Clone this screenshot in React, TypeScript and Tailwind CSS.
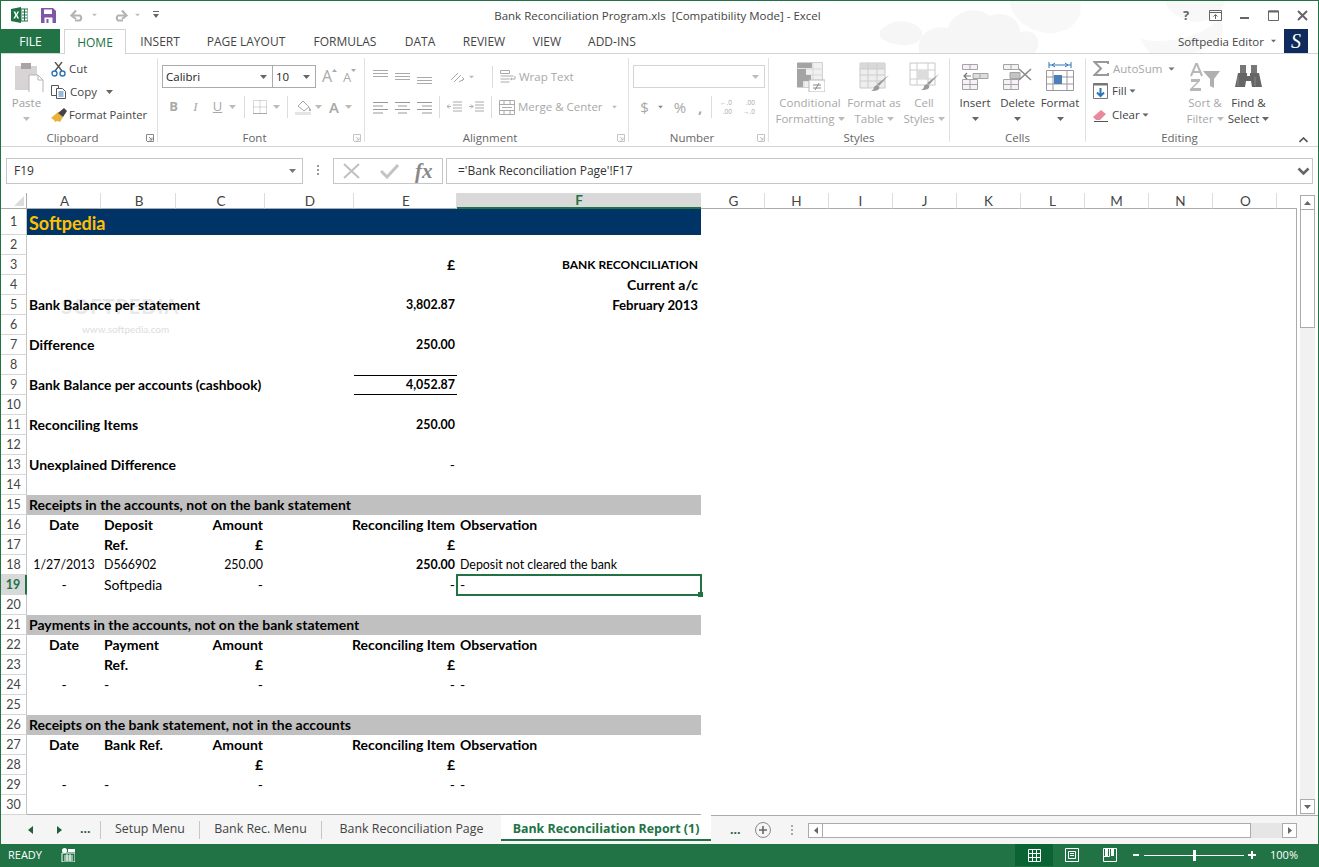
import type { ReactNode } from "react";

type SheetRow = {
  n: number;
  h?: number;
  kind?: "title" | "band" | "label" | "head";
  a?: string;
  b?: string;
  c?: string;
  e?: string;
  f?: string;
  boldE?: boolean;
  fRight?: boolean;
  ruled?: boolean;
};

const sheetRows: SheetRow[] = [
  { n: 1, h: 26, kind: "title", a: "Softpedia" },
  { n: 2 },
  { n: 3, e: "£", boldE: true, f: "BANK RECONCILIATION", fRight: true },
  { n: 4, f: "Current a/c", fRight: true },
  { n: 5, kind: "label", a: "Bank Balance per statement", e: "3,802.87", boldE: true, f: "February 2013", fRight: true },
  { n: 6 },
  { n: 7, kind: "label", a: "Difference", e: "250.00", boldE: true },
  { n: 8 },
  { n: 9, kind: "label", a: "Bank Balance per accounts (cashbook)", e: "4,052.87", boldE: true, ruled: true },
  { n: 10 },
  { n: 11, kind: "label", a: "Reconciling Items", e: "250.00", boldE: true },
  { n: 12 },
  { n: 13, kind: "label", a: "Unexplained Difference", e: "-" },
  { n: 14 },
  { n: 15, kind: "band", a: "Receipts in the accounts, not on the bank statement" },
  { n: 16, kind: "head", a: "Date", b: "Deposit", c: "Amount", e: "Reconciling Item", f: "Observation" },
  { n: 17, kind: "head", b: "Ref.", c: "£", e: "£" },
  { n: 18, a: "1/27/2013", b: "D566902", c: "250.00", e: "250.00", boldE: true, f: "Deposit not cleared the bank" },
  { n: 19, a: "-", b: "Softpedia", c: "-", e: "-", f: "-" },
  { n: 20 },
  { n: 21, kind: "band", a: "Payments in the accounts, not on the bank statement" },
  { n: 22, kind: "head", a: "Date", b: "Payment", c: "Amount", e: "Reconciling Item", f: "Observation" },
  { n: 23, kind: "head", b: "Ref.", c: "£", e: "£" },
  { n: 24, a: "-", b: "-", c: "-", e: "-", f: "-" },
  { n: 25 },
  { n: 26, kind: "band", a: "Receipts on the bank statement, not in the accounts" },
  { n: 27, kind: "head", a: "Date", b: "Bank Ref.", c: "Amount", e: "Reconciling Item", f: "Observation" },
  { n: 28, kind: "head", c: "£", e: "£" },
  { n: 29, a: "-", b: "-", c: "-", e: "-", f: "-" },
  { n: 30 },
];

const columns = [
  { label: "A", w: "w-[74px]", pad: "pl-[2px]" },
  { label: "B", w: "w-[75px]", pad: "pl-[2px]" },
  { label: "C", w: "w-[89px]", pad: "pl-[2px]" },
  { label: "D", w: "w-[89px]", pad: "pl-[2px]" },
  { label: "E", w: "w-[103px]", pad: "pl-[2px]" },
  { label: "F", w: "w-[244px]", pad: "" },
  { label: "G", w: "w-[64px]", pad: "pl-[2px]" },
  { label: "H", w: "w-[64px]", pad: "" },
  { label: "I", w: "w-[64px]", pad: "" },
  { label: "J", w: "w-[64px]", pad: "" },
  { label: "K", w: "w-[64px]", pad: "" },
  { label: "L", w: "w-[64px]", pad: "" },
  { label: "M", w: "w-[64px]", pad: "" },
  { label: "N", w: "w-[64px]", pad: "" },
  { label: "O", w: "w-[64px]", pad: "pl-[2px]" },
];

const ribbonTabs = [
  { label: "INSERT", w: "w-[68px]" },
  { label: "PAGE LAYOUT", w: "w-[104px]" },
  { label: "FORMULAS", w: "w-[94px]" },
  { label: "DATA", w: "w-[56px]" },
  { label: "REVIEW", w: "w-[72px]" },
  { label: "VIEW", w: "w-[54px]" },
  { label: "ADD-INS", w: "w-[76px]" },
];

function Ico({ w, h, children, className }: { w: number; h: number; children: ReactNode; className?: string }) {
  return (
    <svg width={w} height={h} viewBox={`0 0 ${w} ${h}`} className={`shrink-0 ${className ?? ""}`}>
      {children}
    </svg>
  );
}

function Caret({ className, color = "#777" }: { className?: string; color?: string }) {
  return (
    <Ico w={7} h={4} className={className}>
      <path d="M0 0h7L3.500 4z" fill={color} />
    </Ico>
  );
}

function Launcher({ color = "#888" }: { color?: string }) {
  return (
    <Ico w={8} h={8}>
      <path d="M0.500 7V0.500H7.500V7.500H1" fill="none" stroke={color} />
      <path d="M3 3l3 3M6 3.500V6H3.500" fill="none" stroke={color} />
    </Ico>
  );
}

function Group({ w, label, launcher, launcherColor, children, last }: {
  w: string;
  label: string;
  launcher?: boolean;
  launcherColor?: string;
  children: ReactNode;
  last?: boolean;
}) {
  return (
    <div className={`${w} mt-[4px] h-[84px] shrink-0 flex flex-col ${last ? "" : "border-r border-[#e1e1e1]"}`}>
      <div className="flex-1 min-h-0">{children}</div>
      <div className={`-mb-[3px] h-[14px] relative flex items-center justify-center text-[11.5px] leading-[14px] text-[#666] ${launcher ? "pr-[13px]" : ""}`}>
        <span>{label}</span>
        {launcher && (
          <span className="absolute right-[3px] top-[3px] flex">
            <Launcher color={launcherColor} />
          </span>
        )}
      </div>
    </div>
  );
}

function Big({ w, icon, lines, tone = "on", caretOwnLine }: {
  w: string;
  icon: ReactNode;
  lines: string[];
  tone?: "on" | "off";
  caretOwnLine?: boolean;
}) {
  const text = tone === "on" ? "text-[#444]" : "text-[#a8a8a8]";
  const caret = tone === "on" ? "#666" : "#bbb";
  return (
    <div className={`${w} shrink-0 flex flex-col items-center pt-[4px] text-[11.5px] leading-[16px] ${text}`}>
      <div className="h-[30px] flex items-center justify-center">{icon}</div>
      <div className="mt-[3px] whitespace-nowrap">{lines[0]}</div>
      {caretOwnLine ? (
        <div className="h-[16px] flex items-center">
          <Caret color={caret} />
        </div>
      ) : (
        <div className="whitespace-nowrap flex items-center gap-[3px]">
          {lines[1]}
          <Caret color={caret} />
        </div>
      )}
    </div>
  );
}

function Sep({ className }: { className: string }) {
  return <span className={`w-px h-[22px] bg-[#dcdcdc] shrink-0 ${className}`} />;
}

function Bars({ rows }: { rows: [number, number][] }) {
  return (
    <Ico w={15} h={13}>
      {rows.map(([x, width], i) => (
        <rect key={i} x={x} y={1 + i * 3.5} width={width} height={1} fill="#999" />
      ))}
    </Ico>
  );
}

function VAlign({ offset }: { offset: number }) {
  return (
    <Ico w={15} h={15}>
      {[0, 3, 6].map((y) => (
        <rect key={y} x={0} y={offset + y} width={15} height={1} fill="#aaa" />
      ))}
    </Ico>
  );
}

function Cell({ row, col }: { row: SheetRow; col: "a" | "b" | "c" | "d" | "e" | "f" }) {
  const width = { a: "w-[74px]", b: "w-[75px]", c: "w-[89px]", d: "w-[89px]", e: "w-[103px]", f: "w-[244px]" }[col];
  const value = col === "d" ? undefined : row[col];
  const wide = row.kind === "title" || row.kind === "band" || row.kind === "label";
  let cls = "";
  if (col === "a") cls = wide ? "pl-[2px] justify-start" : "justify-center";
  if (col === "b") cls = "pl-[3px] justify-start";
  if (col === "c" || col === "e") cls = "pr-[2px] justify-end";
  if (col === "f") cls = row.fRight ? "pr-[3px] justify-end" : "pl-[3px] justify-start";
  const bold =
    row.kind === "title" || row.kind === "band" || row.kind === "head" || (row.kind === "label" && col === "a") || (col === "e" && row.boldE) || row.fRight;
  // Lato digits and capitals run wider than the sheet's, so these get a smaller size
  const numeric = value ? /^[A-Z]?[\d,./]+$/.test(value) : false;
  let size = "";
  if (numeric || (col === "f" && row.n === 18)) size = "text-[12.4px]";
  if (col === "f" && row.n === 3) size = "text-[12px]";
  if (col === "f" && row.n === 5) size = "text-[13.2px]";
  if (col === "a" && (row.n === 5 || row.n === 9)) size = "text-[13.75px]";
  const rule = col === "e" && row.ruled ? "border-y border-black" : "";
  return (
    <div className={`${width} h-full shrink-0 relative flex items-center whitespace-nowrap ${row.kind === "title" ? "leading-[24px] pt-px" : "leading-[18px]"} ${cls} ${rule} ${bold ? "font-bold" : ""} ${size}`}>
      {value}
      {col === "f" && row.n === 19 && (
        <span className="absolute -left-px -top-px -right-px -bottom-px border-2 border-[#217346]">
          <span className="absolute -right-[3px] -bottom-[3px] w-[5px] h-[5px] bg-[#217346]" />
        </span>
      )}
    </div>
  );
}

function Row({ row }: { row: SheetRow }) {
  const selected = row.n === 19;
  const rowBg = row.kind === "title" ? "bg-[#003366] text-[#ffc000] text-[18px]" : row.kind === "band" ? "bg-[#c0c0c0] text-black" : "text-black";
  return (
    <div className={`flex ${row.h === 26 ? "h-[26px]" : "h-[20px]"}`}>
      <div className={`w-[26px] shrink-0 flex items-center justify-center pt-px border-b border-[#d6d6d6] text-[12.5px] ${selected ? "bg-[#d9d9d9] text-[#217346] font-bold border-r-2 border-r-[#217346]" : "text-[#444] border-r border-r-[#c6c6c6]"}`}>
        {row.n}
      </div>
      <div className={`flex w-[674px] shrink-0 text-[14px] ${rowBg} ${row.n === 30 ? "border-b border-[#ababab]" : ""}`}>
        {(["a", "b", "c", "d", "e", "f"] as const).map((col) => (
          <Cell key={col} row={row} col={col} />
        ))}
      </div>
    </div>
  );
}

function TitleBar() {
  return (
    <div className="h-[28px] flex items-center relative shrink-0 text-[#444]">
      <svg width="440" height="53" viewBox="0 0 440 53" className="absolute left-[879px] top-0">
        <path d="M40 53c-6-16 10-30 28-26 4-16 28-24 42-12 14-6 30 2 30 16 16-4 24 10 14 22z" fill="#f6f6f6" />
        <path d="M0 30c12-14 34-12 42 0 2 10-10 16-22 14S-4 38 0 30z" fill="#f6f6f6" />
        <path d="M130 0h70c4 18-10 34-34 32-20-2-36-18-36-32z" fill="#f8f8f8" />
        <path d="M285 0h60c-2 14-20 24-36 20-14-4-22-12-24-20zM260 38c30 6 60-2 80-20 10 14-6 30-30 35h-40z" fill="#f8f8f8" />
      </svg>
      <span className="ml-[10px] flex relative">
        <Ico w={17} h={16}>
          <path d="M0 2l10-2v16L0 14z" fill="#1e7145" />
          <path d="M10 2h7v12h-7z" fill="#fff" stroke="#1e7145" />
          <path d="M11 5h5M11 8h5M11 11h5M13.500 2v12" stroke="#1e7145" />
          <path d="M2.500 4.500h1.800L5.300 7l1-2.500h1.700L6.200 8l1.900 3.500H6.300L5.200 9l-1.100 2.500H2.400L4.300 8z" fill="#fff" />
        </Ico>
      </span>
      <span className="ml-[13px] flex relative">
        <Ico w={15} h={15}>
          <path d="M0 0h12l3 3v12H0z" fill="#7e57a8" />
          <path d="M3 1.500h8v4.500H3z" fill="#fff" />
          <path d="M3.500 9.500h8v5.500h-8z" fill="#fff" />
          <path d="M5.500 11h2v4h-2z" fill="#7e57a8" />
        </Ico>
      </span>
      <span className="ml-[14px] flex items-center relative">
        <Ico w={15} h={13}>
          <path d="M2 6.500h8a3.200 3.200 0 010 5H5" fill="none" stroke="#b4b4b4" strokeWidth="2.200" />
          <path d="M6 1.500L1.500 6.500 6 10" fill="none" stroke="#b4b4b4" strokeWidth="2.200" />
        </Ico>
        <Caret color="#c0c0c0" className="ml-[6px] scale-75" />
      </span>
      <span className="ml-[15px] flex items-center relative">
        <Ico w={15} h={13}>
          <path d="M13 6.500H5a3.200 3.200 0 000 5h5" fill="none" stroke="#b4b4b4" strokeWidth="2.200" />
          <path d="M9 1.500l4.500 5L9 10" fill="none" stroke="#b4b4b4" strokeWidth="2.200" />
        </Ico>
        <Caret color="#c0c0c0" className="ml-[6px] scale-75" />
      </span>
      <span className="ml-[12px] relative flex">
        <Ico w={6} h={8}>
          <path d="M0 .5h6" stroke="#666" />
          <path d="M0 3h6L3 7z" fill="#666" />
        </Ico>
      </span>
      <span className="absolute left-0 right-0 top-[1px] h-[28px] flex items-center justify-center text-[11.5px] text-[#444] pointer-events-none -translate-x-[2px]">
        Bank Reconciliation Program.xls&nbsp; [Compatibility Mode] - Excel
      </span>
      <div className="ml-auto flex items-center relative">
        <span className="w-[12px] text-center font-bold text-[13px] text-[#666] leading-none">?</span>
        <span className="ml-[17px] flex">
          <Ico w={13} h={11}>
            <path d="M.5.5h12v10H.5z" fill="none" stroke="#666" />
            <path d="M.5 2.500h12" stroke="#666" />
            <path d="M6.500 9V5M4.500 6.500l2-2 2 2" fill="none" stroke="#666" />
          </Ico>
        </span>
        <span className="ml-[17px] flex">
          <Ico w={11} h={11}>
            <path d="M1 8h9" stroke="#666" strokeWidth="2" />
          </Ico>
        </span>
        <span className="ml-[18px] flex">
          <Ico w={11} h={11}>
            <path d="M.5 1h10v9.500H.5z" fill="none" stroke="#666" />
            <path d="M.5 1.500h10" stroke="#666" strokeWidth="2" />
          </Ico>
        </span>
        <span className="ml-[18px] mr-[10px] flex">
          <Ico w={11} h={11}>
            <path d="M1 1l9 9M10 1l-9 9" stroke="#666" strokeWidth="2" />
          </Ico>
        </span>
      </div>
    </div>
  );
}

function TabStrip() {
  return (
    <div className="h-[25px] flex items-stretch relative shrink-0 border-b border-[#d4d4d4] text-[12px]">
      <div className="w-[59px] h-[24px] pt-px bg-[#217346] text-white flex items-center justify-center">FILE</div>
      <div className="ml-[4px] w-[62px] h-[25px] pt-px bg-white border border-b-0 border-[#d4d4d4] text-[#217346] flex items-center justify-center relative z-10">
        HOME
      </div>
      {ribbonTabs.map((tab) => (
        <div key={tab.label} className={`${tab.w} h-[24px] pt-px flex items-center justify-center text-[#444] shrink-0`}>
          {tab.label}
        </div>
      ))}
      <div className="ml-auto flex items-center relative h-[24px] text-[#444] text-[11.5px]">
        <span className="pt-px">Softpedia Editor</span>
        <Caret className="ml-[6px] scale-75" color="#666" />
        <span className="ml-[7px] mr-[10px] w-[24px] h-[24px] bg-[#0f2a5c] text-white flex items-center justify-center text-[20px] italic font-['Liberation_Serif',serif]">S</span>
      </div>
    </div>
  );
}

function Ribbon() {
  return (
    <div className="h-[93px] flex border-b border-[#d4d4d4] shrink-0 text-[11.5px] font-['Open_Sans',sans-serif]">
      <Group w="w-[157px]" label="Clipboard" launcher>
        <div className="flex">
          <div className="w-[49px] pl-[10px] flex flex-col items-center text-[#a0a0a0] leading-[16px]">
            <Ico w={29} h={30} className="mt-[4px] -translate-x-[1px]">
              <path d="M0 4h22v24H0z" fill="#d8d4d6" />
              <path d="M6 1h10v6H6z" fill="#a8a4a6" />
              <path d="M14 13h9l5 5v13H14z" fill="#fff" stroke="#b4b4b4" />
              <path d="M23 13v5h5" fill="none" stroke="#b4b4b4" />
            </Ico>
            <span className="mt-[3px] -translate-x-[4px]">Paste</span>
            <Caret color="#bbb" className="mt-[6px] -translate-x-[4px]" />
          </div>
          <div className="ml-[1px] text-[#444]">
            <div className="h-[22px] flex items-center">
              <Ico w={15} h={15}>
                <path d="M4 0l7 9M11 0L4 9" stroke="#555" strokeWidth="1.400" />
                <circle cx="3.500" cy="11.500" r="2.500" fill="none" stroke="#2e75b6" strokeWidth="1.400" />
                <circle cx="11.500" cy="11.500" r="2.500" fill="none" stroke="#2e75b6" strokeWidth="1.400" />
              </Ico>
              <span className="ml-[3px]">Cut</span>
            </div>
            <div className="h-[24px] flex items-center">
              <Ico w={15} h={14}>
                <path d="M.5.5h7v10h-7z" fill="#fff" stroke="#555" />
                <path d="M5.500 3.500h6l3 3v7h-9z" fill="#fff" stroke="#555" />
                <path d="M7.500 7h5M7.500 9h5M7.500 11h5" stroke="#2e75b6" />
              </Ico>
              <span className="ml-[4px]">Copy</span>
              <Caret color="#666" className="ml-[9px]" />
            </div>
            <div className="h-[22px] flex items-center">
              <Ico w={16} h={14}>
                <path d="M0 10l7-6 5 5-3 5-3-1-2 1-1-2z" fill="#e8b23a" />
                <path d="M7 5l6-5 3 3-4 6z" fill="#444" />
              </Ico>
              <span className="ml-[2px] text-[11.2px]">Format Painter</span>
            </div>
          </div>
        </div>
      </Group>

      <Group w="w-[207px]" label="Font" launcher launcherColor="#c4c4c4">
        <div className="pt-[7px] flex items-start pl-[4px]">
          <div className="w-[111px] h-[23px] bg-white border border-[#ababab] flex items-center justify-between pl-[3px] pr-[5px] text-[11.5px] text-[#222]">
            Calibri
            <Caret color="#666" />
          </div>
          <div className="w-[44px] h-[23px] -ml-px bg-white border border-[#ababab] flex items-center justify-between pl-[3px] pr-[5px] text-[11.5px] text-[#222]">
            10
            <Caret color="#666" />
          </div>
          <span className="ml-[6px] w-[15px] mt-[1px] flex items-start text-[#aaa]">
            <span className="text-[16px] leading-[21px]">A</span>
            <Ico w={5} h={3} className="mt-[3px]">
              <path d="M0 3h5L2.500 0z" fill="#aaa" />
            </Ico>
          </span>
          <span className="ml-[6px] w-[15px] mt-[3px] flex items-start text-[#aaa]">
            <span className="text-[13px] leading-[19px]">A</span>
            <Ico w={5} h={3} className="mt-[1px]">
              <path d="M0 0h5L2.500 3z" fill="#aaa" />
            </Ico>
          </span>
        </div>
        <div className="mt-[8px] flex items-center h-[22px] text-[13px] text-[#a8a8a8]">
          <span className="ml-[10px] w-[11px] text-center font-bold">B</span>
          <span className="ml-[11px] w-[11px] text-center italic font-['Liberation_Serif',serif]">I</span>
          <span className="ml-[11px] w-[11px] text-center underline">U</span>
          <Caret color="#bbb" className="ml-[6px]" />
          <Sep className="ml-[8px]" />
          <span className="ml-[8px] flex">
            <Ico w={14} h={14}>
              <path d="M.5.5h13v13H.5zM7 .5v13M.5 7h13" fill="none" stroke="#b0b0b0" strokeDasharray="1 1" />
              <path d="M0 13.500h14" stroke="#aaa" />
            </Ico>
          </span>
          <Caret color="#bbb" className="ml-[6px]" />
          <Sep className="ml-[7px]" />
          <span className="ml-[7px] flex">
            <Ico w={17} h={16}>
              <path d="M3 7l5-5 6 6-5 4z" fill="#fff" stroke="#aaa" />
              <path d="M14 8c2 2 2 3 2 4h-2z" fill="#aaa" />
              <path d="M0 13h16v3H0z" fill="#e4e4e4" />
            </Ico>
          </span>
          <Caret color="#bbb" className="ml-[3px]" />
          <span className="ml-[7px] text-[15px] font-semibold">A</span>
          <Caret color="#bbb" className="ml-[6px]" />
        </div>
      </Group>

      <Group w="w-[264px]" label="Alignment" launcher launcherColor="#c4c4c4">
        <div className="pt-[7px] h-[30px] flex items-center pl-[8px] text-[#a8a8a8]">
          <VAlign offset={1} />
          <span className="ml-[7px] flex"><VAlign offset={4} /></span>
          <span className="ml-[7px] flex"><VAlign offset={8} /></span>
          <span className="ml-[18px] flex">
            <Ico w={15} h={14}>
              <path d="M1 10l7-7M4 12l7-7" stroke="#aaa" fill="none" />
              <path d="M9 12l5-3M12 7l2 2-2 2" stroke="#aaa" fill="none" />
            </Ico>
          </span>
          <Caret color="#bbb" className="ml-[3px] scale-75" />
          <Sep className="ml-[17px]" />
          <span className="ml-[7px] flex">
            <Ico w={16} h={14}>
              <path d="M.5.5h9v3h-9zM.5 6h13M.5 9h9M.5 12h9" fill="none" stroke="#aaa" />
              <path d="M15 6v3h-4M12 8l-1.500 1 1.500 1" fill="none" stroke="#aaa" />
            </Ico>
          </span>
          <span className="ml-[3px]">Wrap Text</span>
        </div>
        <div className="mt-[8px] h-[22px] flex items-center pl-[8px] text-[#a8a8a8]">
          <Bars rows={[[0, 15], [0, 10], [0, 15], [0, 10]]} />
          <span className="ml-[7px] flex"><Bars rows={[[0, 15], [3, 9], [0, 15], [3, 9]]} /></span>
          <span className="ml-[7px] flex"><Bars rows={[[0, 15], [5, 10], [0, 15], [5, 10]]} /></span>
          <Sep className="ml-[7px]" />
          <span className="ml-[7px] flex">
            <Ico w={15} h={12}>
              <path d="M6 1h9M6 4h9M6 7h9M6 10h9M4 5.500H0M2 3.500l-2 2 2 2" fill="none" stroke="#aaa" />
            </Ico>
          </span>
          <span className="ml-[7px] flex">
            <Ico w={15} h={12}>
              <path d="M6 1h9M6 4h9M6 7h9M6 10h9M0 5.500h4M2 3.500l2 2-2 2" fill="none" stroke="#aaa" />
            </Ico>
          </span>
          <Sep className="ml-[7px]" />
          <span className="ml-[7px] flex">
            <Ico w={16} h={15}>
              <path d="M.5.5h15v14H.5zM.5 4.500h15M.5 10.500h15M5 .5v4M11 .5v4M5 10.500v4M11 10.500v4" fill="none" stroke="#aaa" />
              <path d="M3 7.500h10" stroke="#aaa" />
            </Ico>
          </span>
          <span className="ml-[3px] whitespace-nowrap">Merge &amp; Center</span>
          <Caret color="#bbb" className="ml-[8px] scale-75" />
        </div>
      </Group>

      <Group w="w-[140px]" label="Number" launcher launcherColor="#c4c4c4">
        <div className="pt-[7px] pl-[4px]">
          <div className="w-[132px] h-[23px] bg-white border border-[#d4d4d4] flex items-center justify-end pr-[5px]">
            <Caret color="#bbb" />
          </div>
        </div>
        <div className="mt-[8px] h-[22px] flex items-center text-[#a8a8a8] text-[15px]">
          <span className="ml-[10px] w-[11px] text-center">$</span>
          <Caret color="#888" className="ml-[7px] scale-75" />
          <span className="ml-[7px] w-[18px] text-center">%</span>
          <span className="ml-[9px] font-bold leading-none w-[5px]">,</span>
          <Sep className="ml-[8px]" />
          <span className="ml-[7px] w-[13px] flex flex-col items-end text-[6.5px] leading-[9px]">
            <span>←.0</span>
            <span>.00</span>
          </span>
          <span className="ml-[10px] w-[13px] flex flex-col items-end text-[6.5px] leading-[9px]">
            <span>.00</span>
            <span>→.0</span>
          </span>
        </div>
      </Group>

      <Group w="w-[181px]" label="Styles">
        <div className="flex pl-[2px]">
          <Big
            w="w-[78px]"
            tone="off"
            lines={["Conditional", "Formatting"]}
            icon={
              <Ico w={30} h={30}>
                <path d="M2.500.5h25v25h-25z" fill="#f0f0f0" stroke="#d0d0d0" />
                <path d="M9 .5v25M18 .5v25M2.500 7h25M2.500 13h25M2.500 19h25" stroke="#d8d8d8" />
                <path d="M2 1h15v5H2zM2 7h9v6H2zM2 19h6v6H2zM2 13h14v6H2z" fill="#a4a4a4" />
                <path d="M14 18h16v12H14z" fill="#fff" stroke="#b8b8b8" />
                <path d="M18 23h8M18 26h8M24 21l-4 7" stroke="#888" />
              </Ico>
            }
          />
          <Big
            w="w-[50px]"
            tone="off"
            lines={["Format as", "Table"]}
            icon={
              <Ico w={30} h={30}>
                <path d="M1 1h25v25H1z" fill="#eee" stroke="#c8c8c8" />
                <path d="M1 1h25v6H1z" fill="#d8d8d8" />
                <path d="M9 1v25M18 1v25M1 7h25M1 13h25M1 19h25" stroke="#ccc" />
                <path d="M30 13L20 24l-2-2z" fill="#9a9a9a" />
                <path d="M18 23c2 1 3 2 2 4-2 2-5 2-8 2 2-1 3-2 3-4 1-1 2-2 3-2z" fill="#9a9a9a" />
              </Ico>
            }
          />
          <Big
            w="w-[50px]"
            tone="off"
            lines={["Cell", "Styles"]}
            icon={
              <Ico w={30} h={30}>
                <path d="M1 1h25v22H1z" fill="#fff" stroke="#c8c8c8" />
                <path d="M1 8h25M1 17h25M8 1v22M19 1v22" stroke="#ccc" />
                <path d="M8 8h11v9H8z" fill="#dcdcdc" />
                <path d="M30 12L20 23l-2-2z" fill="#9a9a9a" />
                <path d="M18 22c2 1 3 2 2 4-2 2-5 2-8 2 2-1 3-2 3-4 1-1 2-2 3-2z" fill="#9a9a9a" />
              </Ico>
            }
          />
        </div>
      </Group>

      <Group w="w-[136px]" label="Cells">
        <div className="flex pl-[4px]">
          <Big
            w="w-[42px]"
            lines={["Insert"]}
            caretOwnLine
            icon={
              <Ico w={27} h={28}>
                <path d="M.5 1.500h15v5H.5zM8 1.500v5M.5 16.500h15v10H.5zM8 16.500v10M.5 21.500h15" fill="#f6f1f6" stroke="#a4a4a4" />
                <path d="M11 10.500h15v5H11zM18 10.500v5" fill="#ddd" stroke="#a4a4a4" />
                <path d="M9 13H2M5 10l-3 3 3 3" fill="none" stroke="#777" strokeWidth="1.200" />
              </Ico>
            }
          />
          <Big
            w="w-[43px]"
            lines={["Delete"]}
            caretOwnLine
            icon={
              <Ico w={30} h={28}>
                <path d="M.5 1.500h15v5H.5zM8 1.500v5M.5 16.500h15v10H.5zM8 16.500v10M.5 21.500h15" fill="#f6f1f6" stroke="#a4a4a4" />
                <path d="M7 9.500h10v6H7z" fill="#c4c4c4" stroke="#a4a4a4" />
                <path d="M16 6l12 11M28 6L16 17" stroke="#8a8a8a" strokeWidth="1.600" />
              </Ico>
            }
          />
          <Big
            w="w-[42px]"
            lines={["Format"]}
            caretOwnLine
            icon={
              <Ico w={28} h={30}>
                <path d="M3 3h22M3 0v6M25 0v6M6 3l3-2M6 3l3 2M22 3l-3-2M22 3l-3 2" fill="none" stroke="#2e75b6" />
                <path d="M.5 8.500h27v20H.5zM7 8.500v20M21 8.500v20M.5 15h27M.5 22h27" fill="#fff" stroke="#999" />
                <path d="M8 13h8v9H8z" fill="#4a7fb8" />
              </Ico>
            }
          />
        </div>
      </Group>

      <Group w="w-[187px]" label="Editing" last>
        <div className="flex">
          <div className="w-[97px] pl-[7px]">
            <div className="h-[21px] flex items-center text-[#a8a8a8]">
              <Ico w={16} h={15}>
                <path d="M15 3V1H1.500L8 7.500 1.500 14H15v-2" fill="none" stroke="#999" strokeWidth="2" />
              </Ico>
              <span className="ml-[4px]">AutoSum</span>
              <Caret color="#777" className="ml-[6px] scale-90" />
            </div>
            <div className="h-[24px] flex items-center text-[#444]">
              <Ico w={15} h={16}>
                <path d="M.5.5h14v15H.5z" fill="#fff" stroke="#777" />
                <path d="M.5 1.500h14" stroke="#777" strokeWidth="2" />
                <path d="M7.500 5v8M4 9.500l3.500 3.500L11 9.500" fill="none" stroke="#2e75b6" strokeWidth="2" />
              </Ico>
              <span className="ml-[4px]">Fill</span>
              <Caret color="#666" className="ml-[2px] scale-90" />
            </div>
            <div className="h-[23px] flex items-center text-[#444]">
              <Ico w={15} h={14}>
                <path d="M0 9l8-7 5 4-6 6H3z" fill="#e88a9c" />
                <path d="M1 13.500h14" stroke="#555" />
              </Ico>
              <span className="ml-[4px]">Clear</span>
              <Caret color="#666" className="ml-[2px] scale-90" />
            </div>
          </div>
          <Big
            w="w-[44px]"
            tone="off"
            lines={["Sort &", "Filter"]}
            icon={
              <Ico w={31} h={28}>
                <path d="M1 13L6 1h1l5 12M3 9h7" fill="none" stroke="#b8b8b8" strokeWidth="2" />
                <path d="M1 16h9v2l-7 7h8v3H0v-2l7-7H1z" fill="#b8b8b8" />
                <path d="M13 8h17l-6 8v9l-4-2v-7z" fill="#b0b0b0" />
              </Ico>
            }
          />
          <Big
            w="w-[43px]"
            lines={["Find &", "Select"]}
            icon={
              <Ico w={27} h={28}>
                <path d="M5 2h6v8H5zM16 2h6v8h-6z" fill="#777" />
                <path d="M3 10h9v3h3v-3h9l3 14H17l-1-6h-5l-1 6H0z" fill="#666" />
                <path d="M3 14v9M20 14v9" stroke="#888" />
              </Ico>
            }
          />
        </div>
      </Group>

      <div className="flex-1 flex items-end justify-end pr-[10px] pb-[3px]">
        <Ico w={9} h={6}>
          <path d="M.5 5l4-4 4 4" fill="none" stroke="#555" strokeWidth="1.600" />
        </Ico>
      </div>
    </div>
  );
}

function FormulaBar() {
  return (
    <div className="h-[46px] flex items-start pt-[11px] pl-[5px] pr-[5px] shrink-0 text-[12px] text-[#333] font-['Open_Sans',sans-serif]">
      <div className="w-[297px] h-[26px] border border-[#c6c6c6] flex items-center justify-between pl-[7px] pr-[6px]">
        F19
        <Caret color="#777" />
      </div>
      <span className="w-[30px] flex flex-col items-center gap-[2px] pt-[7px]">
        {[0, 1, 2].map((dot) => (
          <span key={dot} className="w-[2px] h-[2px] bg-[#999]" />
        ))}
      </span>
      <div className="w-[110px] h-[26px] border border-[#c6c6c6] flex items-center pl-[9px]">
        <Ico w={17} h={16}>
          <path d="M1 1l15 14M16 1L1 15" stroke="#c0c0c0" strokeWidth="2" />
        </Ico>
        <span className="ml-[20px] flex">
          <Ico w={19} h={16}>
            <path d="M1 8l6 6L18 2" fill="none" stroke="#c4c4c4" strokeWidth="3" />
          </Ico>
        </span>
        <span className="ml-[16px] text-[21px] leading-none italic font-bold text-[#888] font-['Liberation_Serif',serif]">fx</span>
      </div>
      <div className="ml-[3px] flex-1 h-[26px] border border-[#c6c6c6] flex items-center justify-between pl-[11px] pr-[2px]">
        ='Bank Reconciliation Page'!F17
        <Ico w={13} h={9}>
          <path d="M1.500 1.500l5 5 5-5" fill="none" stroke="#666" strokeWidth="2.600" />
        </Ico>
      </div>
    </div>
  );
}

function ScrollBar() {
  return (
    <div className="ml-[3px] mt-[2px] w-[15px] flex flex-col shrink-0 bg-[#f1f1f1]">
      <div className="h-[15px] bg-white border border-[#ababab] flex items-center justify-center">
        <Ico w={7} h={4}>
          <path d="M0 4h7L3.500 0z" fill="#666" />
        </Ico>
      </div>
      <div className="h-[118px] bg-white border border-t-0 border-[#ababab]" />
      <div className="flex-1" />
      <div className="h-[15px] mb-[1px] bg-white border border-[#ababab] flex items-center justify-center">
        <Caret color="#666" />
      </div>
    </div>
  );
}

function SheetTabs() {
  return (
    <div className="h-[29px] shrink-0 flex bg-[#f5f5f5] text-[12.4px] text-[#444]">
      <div className="flex items-center h-[26px] pt-[3px]">
        <Ico w={5} h={8} className="ml-[27px]">
          <path d="M5 0v8L0 4z" fill="#1f5f3a" />
        </Ico>
        <Ico w={5} h={8} className="ml-[24px]">
          <path d="M0 0v8l5-4z" fill="#1f5f3a" />
        </Ico>
        <span className="ml-[18px] font-bold text-[#1f5f3a] leading-none w-[14px]">...</span>
        <span className="ml-[6px] w-px h-[18px] bg-[#c6c6c6]" />
        <span className="w-[98px] text-center">Setup Menu</span>
        <span className="w-px h-[18px] bg-[#c6c6c6]" />
        <span className="w-[121px] text-center">Bank Rec. Menu</span>
        <span className="w-px h-[18px] bg-[#c6c6c6]" />
        <span className="w-[179px] text-center">Bank Reconciliation Page</span>
      </div>
      <div className="w-[210px] h-[26px] pt-[4px] bg-white border-b-2 border-[#217346] flex items-center justify-center font-bold text-[#217346] whitespace-nowrap">
        Bank Reconciliation Report (1)
      </div>
      <div className="flex-1 h-[29px] border-t border-[#ababab] flex items-center">
        <span className="ml-[19px] w-[12px] font-bold text-[#1f5f3a] leading-none">...</span>
        <span className="ml-[13px] w-[16px] h-[16px] rounded-full border border-[#8a8a8a] flex items-center justify-center">
          <Ico w={10} h={10}>
            <path d="M5 1v8M1 5h8" stroke="#666" strokeWidth="1.600" />
          </Ico>
        </span>
        <span className="ml-[20px] flex flex-col gap-[2px]">
          {[0, 1, 2].map((dot) => (
            <span key={dot} className="w-[2px] h-[2px] bg-[#aaa]" />
          ))}
        </span>
        <div className="ml-[15px] w-[489px] h-[15px] flex bg-[#e6e6e6]">
          <span className="w-[15px] h-[15px] bg-white border border-[#ababab] flex items-center justify-center">
            <Ico w={4} h={7}>
              <path d="M4 0v7L0 3.500z" fill="#666" />
            </Ico>
          </span>
          <span className="w-[429px] h-[15px] -ml-px bg-white border border-[#ababab]" />
          <span className="flex-1" />
          <span className="w-[15px] h-[15px] bg-white border border-[#ababab] flex items-center justify-center">
            <Ico w={4} h={7}>
              <path d="M0 0v7l4-3.500z" fill="#666" />
            </Ico>
          </span>
        </div>
      </div>
    </div>
  );
}

function StatusBar() {
  return (
    <div className="flex-1 bg-[#217346] flex items-center text-white text-[11px] font-['Open_Sans',sans-serif]">
      <span className="ml-[7px]">READY</span>
      <span className="ml-[19px] flex">
        <Ico w={14} h={14}>
          <path d="M1 5h13v9H1z" fill="none" stroke="#fff" />
          <path d="M3 8h9M3 10h9M3 12h9M6 6v7M9 6v7" stroke="#fff" />
          <circle cx="3.500" cy="2.500" r="2.500" fill="#fff" />
          <path d="M7 1h7v3H7z" fill="#fff" />
        </Ico>
      </span>
      <div className="ml-auto flex items-center">
        <div className="w-[38px] h-[22px] bg-[#0a6332] flex items-center justify-center">
          <Ico w={13} h={13}>
            <path d="M.5.5h12v12H.5zM4.500.5v12M8.500.5v12M.5 4.500h12M.5 8.500h12" fill="none" stroke="#fff" />
          </Ico>
        </div>
        <span className="ml-[12px] flex">
          <Ico w={14} h={14}>
            <path d="M.5.5h13v13H.5z" fill="none" stroke="#fff" />
            <path d="M3.500 3.500h7v7h-7zM5 5.500h4M5 7.500h4" fill="none" stroke="#fff" />
          </Ico>
        </span>
        <span className="ml-[24px] flex">
          <Ico w={14} h={14}>
            <path d="M.5.5h13v13H.5z" fill="none" stroke="#fff" />
            <path d="M.5 8.500h6V.5" fill="none" stroke="#fff" />
            <path d="M2 1h3v7H2zM8 1h3v7H8z" fill="#fff" />
          </Ico>
        </span>
        <span className="ml-[16px] w-[6px] h-[2px] bg-white" />
        <span className="ml-[5px] w-[100px] h-px bg-white flex items-center justify-center">
          <span className="w-[3px] h-[11px] bg-white" />
        </span>
        <span className="ml-[4px] flex">
          <Ico w={8} h={8}>
            <path d="M4 0v8M0 4h8" stroke="#fff" strokeWidth="2" />
          </Ico>
        </span>
        <span className="ml-[14px] mr-[20px]">100%</span>
      </div>
    </div>
  );
}

export default function App() {
  return (
    <div className="w-[1319px] h-[867px] bg-white border border-[#217346] flex flex-col overflow-hidden relative font-['Open_Sans',sans-serif]">
      <TitleBar />
      <TabStrip />
      <Ribbon />
      <FormulaBar />
      <div className="flex h-[622px] shrink-0 font-['Lato',sans-serif]">
        <div className="w-[1296px] shrink-0 flex flex-col relative">
          <div className="h-[16px] flex shrink-0 text-[13.5px] text-[#444]">
            <div className="w-[26px] shrink-0 border-b border-r border-[#ababab] flex items-end justify-end pr-[2px] pb-[2px]">
              <Ico w={10} h={10}>
                <path d="M10 0v10H0z" fill="#dcdcdc" />
              </Ico>
            </div>
            {columns.map((col) => (
              <div
                key={col.label}
                className={`${col.w} ${col.pad} shrink-0 flex items-center justify-center pt-px ${col.label === "F" ? "bg-[#d9d9d9] text-[#217346] font-bold border-b-2 border-[#217346]" : "border-r border-b border-r-[#dcdcdc] border-b-[#ababab]"}`}
              >
                {col.label}
              </div>
            ))}
            <div className="flex-1 border-b border-[#ababab]" />
          </div>
          <span className="absolute left-[60px] top-[98px] text-[20px] font-bold tracking-[1px] text-[#e8e8e8] whitespace-nowrap">
            SOFTPEDIA
          </span>
          <span className="absolute left-[81px] top-[129px] text-[10px] text-[#dddddd] whitespace-nowrap">
            www.softpedia.com
          </span>
          <div className="flex-1 relative border-r border-[#ababab] overflow-hidden">
            {sheetRows.map((row) => (
              <Row key={row.n} row={row} />
            ))}
          </div>
        </div>
        <ScrollBar />
      </div>
      <SheetTabs />
      <StatusBar />
    </div>
  );
}
